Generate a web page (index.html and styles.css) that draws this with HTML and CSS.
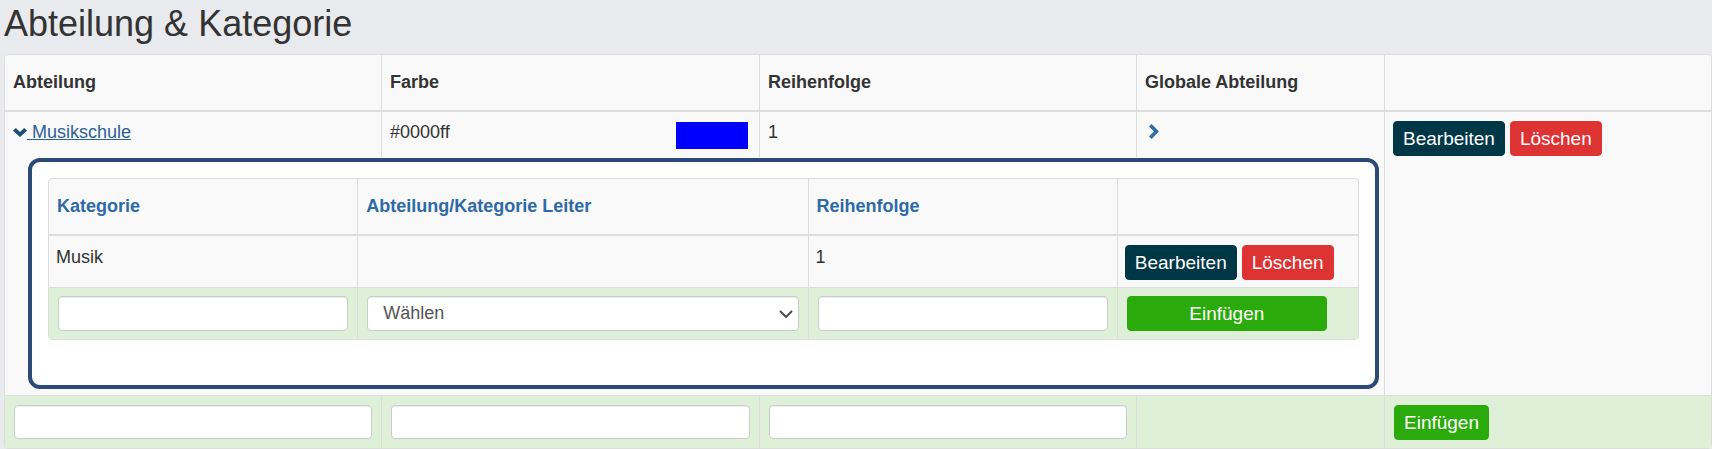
FILE: index.html
```html
<!DOCTYPE html>
<html lang="de">
<head>
<meta charset="utf-8">
<title>Abteilung &amp; Kategorie</title>
<link rel="stylesheet" href="styles.css">
</head>
<body>
<div class="page">
  <h1 class="title">Abteilung &amp; Kategorie</h1>
  <table class="grid outer">
    <colgroup>
      <col class="oc-1"><col class="oc-2"><col class="oc-3"><col class="oc-4"><col class="oc-5">
    </colgroup>
    <thead>
      <tr><th>Abteilung</th><th>Farbe</th><th>Reihenfolge</th><th>Globale Abteilung</th><th></th></tr>
    </thead>
    <tbody>
      <tr class="dept-row">
        <td><a class="dept-link" href="#"><svg class="icon-down" width="14" height="9" viewBox="0 0 14 9"><path d="M0 2.8 L2.8 0 L7 4.1 L11.2 0 L14 2.8 L7 9 Z"/></svg> Musikschule</a></td>
        <td><div class="color-cell"><span>#0000ff</span><span class="swatch" style="background:#0000ff"></span></div></td>
        <td>1</td>
        <td><svg class="icon-right" width="10" height="15" viewBox="0 0 10 15"><path d="M2.6 0 L10 7.5 L2.6 15 L0 12.4 L4.9 7.5 L0 2.6 Z"/></svg></td>
        <td class="actions" rowspan="2"><button class="btn btn-edit">Bearbeiten</button> <button class="btn btn-delete">Löschen</button></td>
      </tr>
      <tr class="detail-row">
        <td colspan="4">
          <div class="detail-panel">
            <table class="grid inner">
              <colgroup>
                <col class="ic-1"><col class="ic-2"><col class="ic-3"><col class="ic-4">
              </colgroup>
              <thead>
                <tr><th>Kategorie</th><th>Abteilung/Kategorie Leiter</th><th>Reihenfolge</th><th></th></tr>
              </thead>
              <tbody>
                <tr class="cat-row">
                  <td>Musik</td>
                  <td></td>
                  <td>1</td>
                  <td><button class="btn btn-edit">Bearbeiten</button> <button class="btn btn-delete">Löschen</button></td>
                </tr>
                <tr class="add-row">
                  <td><input class="field" type="text"></td>
                  <td>
                    <div class="select-wrap">
                      <select class="field select"><option>Wählen</option></select>
                      <svg class="select-caret" width="14" height="8" viewBox="0 0 14 8"><path d="M1 1 L7 7 L13 1" fill="none" stroke="#444" stroke-width="1.8"/></svg>
                    </div>
                  </td>
                  <td><input class="field" type="text"></td>
                  <td><button class="btn btn-add btn-wide">Einfügen</button></td>
                </tr>
              </tbody>
            </table>
          </div>
        </td>
      </tr>
      <tr class="add-row">
        <td><input class="field" type="text"></td>
        <td><input class="field" type="text"></td>
        <td><input class="field" type="text"></td>
        <td></td>
        <td><button class="btn btn-add">Einfügen</button></td>
      </tr>
    </tbody>
  </table>
</div>
</body>
</html>
```

FILE: styles.css
```css
* {
  box-sizing: border-box;
}

body {
  margin: 0;
  background: #e9eaed;
  font-family: "Liberation Sans", Arial, sans-serif;
  font-size: 18px;
  color: #333;
}

.page {
  padding: 0 0 0 4px;
}

.title {
  margin: 4px 0 10px;
  font-size: 36px;
  font-weight: normal;
  line-height: 1.1;
  color: #333;
}

/* generic bordered grid table */
.grid {
  width: 100%;
  table-layout: fixed;
  border-collapse: separate;
  border-spacing: 0;
  background: #f9f9f9;
  border: 1px solid #ddd;
  border-radius: 4px;
}

.grid > * > tr > th,
.grid > * > tr > td {
  border-left: 1px solid #ddd;
  text-align: left;
  vertical-align: top;
  padding: 8px;
  line-height: 24px;
}

.grid > * > tr > th:first-child,
.grid > * > tr > td:first-child {
  border-left: none;
}

.grid > thead > tr > th {
  padding: 15px 8px;
  line-height: 25px;
  font-weight: bold;
  vertical-align: middle;
  border-bottom: 2px solid #ddd;
}

.grid > tbody > .add-row > td {
  background: #dff0d8;
  border-top: 1px solid #ddd;
  padding: 8px 9px;
}

/* outer table columns */
.oc-1 { width: 376px; }
.oc-2 { width: 378px; }
.oc-3 { width: 377px; }
.oc-4 { width: 248px; }
.oc-5 { width: 327px; }

.outer > tbody > .add-row > td {
  padding: 9px 9px 8px;
}

.dept-link {
  color: #2b6196;
  text-decoration: underline;
}

.icon-down {
  fill: #1f4d78;
  vertical-align: 1px;
}

.icon-right {
  fill: #2f6ea8;
  margin: 4px 0 0 4px;
  display: block;
}

.color-cell {
  display: flex;
  justify-content: space-between;
  align-items: flex-start;
}

.swatch {
  width: 72px;
  height: 27px;
  margin: 2px 3px 0 0;
}

.outer > tbody > tr > .actions {
  padding-top: 9px;
}

.outer > tbody > .detail-row > td {
  padding: 1px 5px 6px 23px;
}

.detail-panel {
  background: #fff;
  border: 4px solid #2c4a78;
  border-radius: 12px;
  padding: 16px 16px 45px;
}

/* inner table */
.ic-1 { width: 308px; }
.ic-2 { width: 450px; }
.ic-3 { width: 309px; }
.ic-4 { width: 241px; }

.inner > thead > tr > th {
  color: #2d6aa6;
}

.inner > tbody > .cat-row > td {
  padding: 9px 7px 7px;
}

.btn {
  display: inline-block;
  vertical-align: top;
  height: 35px;
  padding: 0 9px;
  border: 1px solid transparent;
  border-radius: 4px;
  font-family: "Liberation Sans", Arial, sans-serif;
  font-size: 19px;
  line-height: 33px;
  color: #fff;
  cursor: pointer;
}

.btn-edit {
  background: #003746;
  border-color: #003746;
}

.btn-delete {
  background: #dd3333;
  border-color: #dd3333;
}

.btn-add {
  background: #2bab0b;
  border-color: #2bab0b;
}

.btn-wide {
  width: 90%;
}

.field {
  display: block;
  width: 100%;
  height: 34px;
  padding: 0 12px;
  border: 1px solid #ccc;
  border-radius: 4px;
  background: #fff;
  box-shadow: inset 0 1px 1px rgba(0, 0, 0, 0.075);
  font-family: "Liberation Sans", Arial, sans-serif;
  font-size: 18px;
  color: #555;
}

.inner .field {
  height: 35px;
}

.select-wrap {
  position: relative;
}

.select {
  appearance: none;
  -webkit-appearance: none;
  padding-left: 15px;
}

.select-caret {
  position: absolute;
  right: 6px;
  top: 14px;
  pointer-events: none;
}
```
